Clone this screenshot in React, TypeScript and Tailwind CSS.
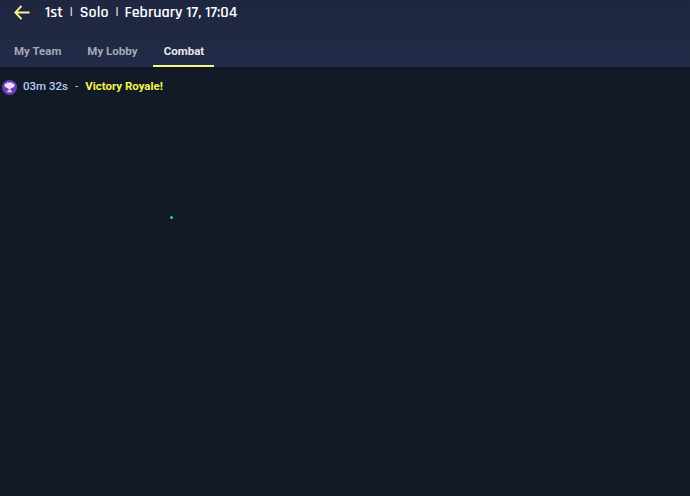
export default function App() {
  return (
    <div className="relative h-[496px] w-[690px] overflow-hidden bg-[#121927] font-['Roboto','Liberation_Sans',sans-serif]">
      <header className="h-[67px] bg-gradient-to-b from-[#1e2640] to-[#222b47]">
        <div className="flex h-[25px] items-center pl-[14px] text-[16px] font-semibold text-white font-['Rajdhani','Inter','Roboto',sans-serif]">
          <svg width="16" height="15" viewBox="0 0 16 15" fill="none" stroke="#f8f68a" strokeWidth="1.8" className="mr-[15px]">
            <path d="M15.5 7.5H1.5M7.5 1L1.2 7.5L7.5 14" />
          </svg>
          <span>1st</span>
          <span className="mx-[7px] text-[13px] font-bold text-[#e3e6ee]">|</span>
          <span>Solo</span>
          <span className="ml-[7px] mr-[6px] text-[13px] font-bold text-[#e3e6ee]">|</span>
          <span>February 17, 17:04</span>
        </div>
        <nav className="mt-[10px] flex h-[32px] text-[11.5px] font-bold">
          <div className="ml-[14px] pt-[8px] text-[#a3a9b8]">My Team</div>
          <div className="ml-[26px] pt-[8px] text-[#a3a9b8]">My Lobby</div>
          <div className="ml-[16px] w-[61px] border-b-2 border-[#f8f68a] pt-[8px] text-center text-[#e6e8ee]">Combat</div>
        </nav>
      </header>
      <div className="flex h-[39px] items-center pl-[2px] pt-[1px] text-[11.5px]">
        <span className="flex h-[15px] w-[15px] items-center justify-center rounded-full bg-[#6d3bb8]">
          <svg width="11" height="11" viewBox="0 0 10 10" fill="#e9def8">
            <path d="M2.5 .5H7.5V1.5H9.5V3.5C9.5 4.6 8.6 5 7.3 5.2C7 5.8 6.3 6.2 5.6 6.3V7.7H7V9.3H3V7.7H4.4V6.3C3.7 6.2 3 5.8 2.7 5.2C1.4 5 .5 4.6 .5 3.5V1.5H2.5Z" />
          </svg>
        </span>
        <span className="ml-[6px] font-medium text-[#b4cdf5]">03m 32s</span>
        <span className="ml-[7px] text-[#d5d9e2]">-</span>
        <span className="ml-[7px] font-bold text-[#f6f64e]">Victory Royale!</span>
      </div>
      <div className="absolute left-[170px] top-[216px] h-[3px] w-[3px] rounded-full bg-[#22e55e]" />
    </div>
  );
}
